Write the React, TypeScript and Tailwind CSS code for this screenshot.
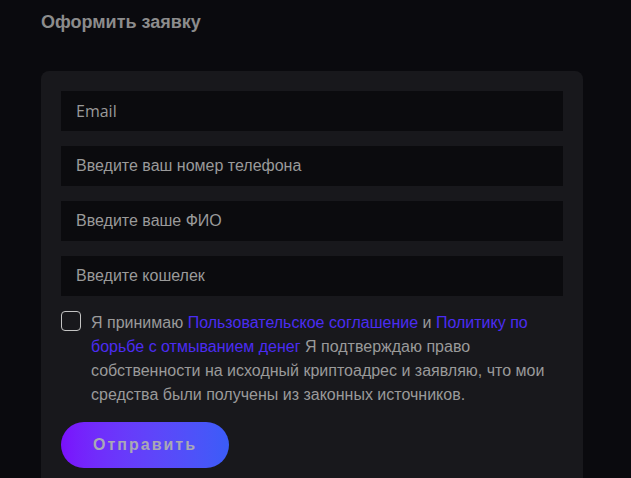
import React from "react";

export default function App() {
  const inputs = ["Введите ваш номер телефона", "Введите ваше ФИО", "Введите кошелек"];
  return (
    <div className="min-h-[478px] w-full bg-[#0a0a0e] pl-[41px] pr-[48px] pt-[11px]" style={{ fontFamily: '"Liberation Sans", Arial, sans-serif' }}>
      <h2 className="text-[18px] font-bold leading-[22px] text-[#8c8c8c]">Оформить заявку</h2>
      <div className="mt-[38px] rounded-[8px] bg-[#18181c] px-[20px] pt-[20px] pb-[20px]">
        <div className="flex flex-col gap-[15px]">
          <div className="flex h-[40px] items-center bg-[#0b0b0e] pl-[15px] text-[16px] text-[#9a9a9a]" style={{ fontFamily: '"Open Sans", sans-serif' }}>
            Email
          </div>
          {inputs.map((t) => (
            <div key={t} className="flex h-[40px] items-center bg-[#0b0b0e] pl-[15px] text-[16px] text-[#9a9a9a]">
              {t}
            </div>
          ))}
        </div>
        <div className="mt-[15px] flex items-start gap-[10px]">
          <div className="h-[20px] w-[20px] shrink-0 rounded-[4px] border-[1.5px] border-[#c4c4c4]" />
          <p className="text-[16px] leading-[24px] text-[#9a9a9a]">
            Я принимаю <span className="text-[#4b2cf2]">Пользовательское соглашение</span> и{" "}
            <span className="text-[#4b2cf2]">Политику по борьбе с отмыванием денег</span> Я подтверждаю право собственности на исходный криптоадрес и заявляю, что мои средства были получены из законных источников.
          </p>
        </div>
        <button className="mt-[15px] flex h-[46px] w-[168px] items-center justify-center rounded-full bg-gradient-to-r from-[#7a0ffc] to-[#3a5cf8] text-[16px] font-bold tracking-[2px] text-[#a9a9b4]">
          Отправить
        </button>
      </div>
    </div>
  );
}
